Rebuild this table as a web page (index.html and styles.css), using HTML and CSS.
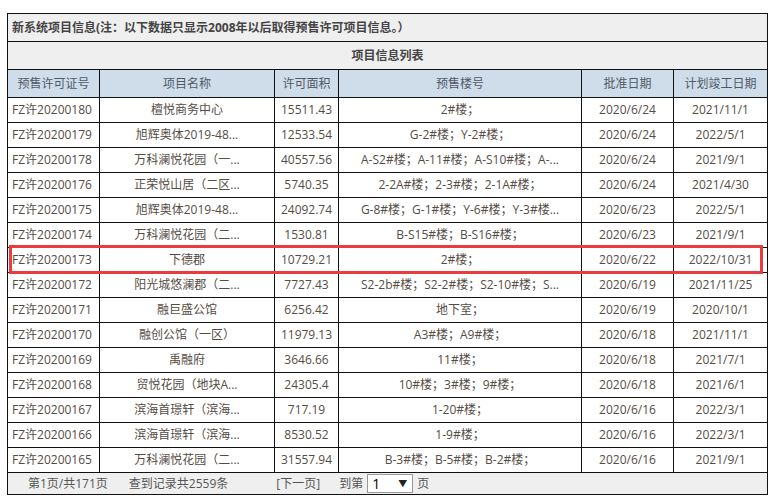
FILE: index.html
```html
<!DOCTYPE html>
<html lang="zh-CN">
<head>
<meta charset="utf-8">
<title>项目信息列表</title>
<link rel="stylesheet" href="styles.css">
</head>
<body>
<div class="wrap">
<table class="grid">
<colgroup>
<col class="c1"><col class="c2"><col class="c3"><col class="c4"><col class="c5"><col class="c6">
</colgroup>
<tr class="title"><td colspan="6">新系统项目信息(注：以下数据只显示2008年以后取得预售许可项目信息。）</td></tr>
<tr class="subtitle"><td colspan="6">项目信息列表</td></tr>
<tr class="head"><td>预售许可证号</td><td>项目名称</td><td>许可面积</td><td>预售楼号</td><td>批准日期</td><td>计划竣工日期</td></tr>
<tr class="row"><td class="l">FZ许20200180</td><td>檀悦商务中心</td><td>15511.43</td><td>2#楼；</td><td>2020/6/24</td><td>2021/11/1</td></tr>
<tr class="row"><td class="l">FZ许20200179</td><td>旭辉奥体2019-48...</td><td>12533.54</td><td>G-2#楼；Y-2#楼；</td><td>2020/6/24</td><td>2022/5/1</td></tr>
<tr class="row"><td class="l">FZ许20200178</td><td>万科澜悦花园（一...</td><td>40557.56</td><td>A-S2#楼；A-11#楼；A-S10#楼；A-...</td><td>2020/6/24</td><td>2021/9/1</td></tr>
<tr class="row"><td class="l">FZ许20200176</td><td>正荣悦山居（二区...</td><td>5740.35</td><td>2-2A#楼；2-3#楼；2-1A#楼；</td><td>2020/6/24</td><td>2021/4/30</td></tr>
<tr class="row"><td class="l">FZ许20200175</td><td>旭辉奥体2019-48...</td><td>24092.74</td><td>G-8#楼；G-1#楼；Y-6#楼；Y-3#楼...</td><td>2020/6/23</td><td>2022/5/1</td></tr>
<tr class="row"><td class="l">FZ许20200174</td><td>万科澜悦花园（二...</td><td>1530.81</td><td>B-S15#楼；B-S16#楼；</td><td>2020/6/23</td><td>2021/9/1</td></tr>
<tr class="row hl"><td class="l">FZ许20200173</td><td>下德郡</td><td>10729.21</td><td>2#楼；</td><td>2020/6/22</td><td>2022/10/31</td></tr>
<tr class="row"><td class="l">FZ许20200172</td><td>阳光城悠澜郡（二...</td><td>7727.43</td><td>S2-2b#楼；S2-2#楼；S2-10#楼；S...</td><td>2020/6/19</td><td>2021/11/25</td></tr>
<tr class="row"><td class="l">FZ许20200171</td><td>融巨盛公馆</td><td>6256.42</td><td>地下室；</td><td>2020/6/19</td><td>2020/10/1</td></tr>
<tr class="row"><td class="l">FZ许20200170</td><td>融创公馆（一区）</td><td>11979.13</td><td>A3#楼；A9#楼；</td><td>2020/6/18</td><td>2021/11/1</td></tr>
<tr class="row"><td class="l">FZ许20200169</td><td>禹融府</td><td>3646.66</td><td>11#楼；</td><td>2020/6/18</td><td>2021/7/1</td></tr>
<tr class="row"><td class="l">FZ许20200168</td><td>贸悦花园（地块A...</td><td>24305.4</td><td>10#楼；3#楼；9#楼；</td><td>2020/6/18</td><td>2021/6/1</td></tr>
<tr class="row"><td class="l">FZ许20200167</td><td>滨海首璟轩（滨海...</td><td>717.19</td><td>1-20#楼；</td><td>2020/6/16</td><td>2022/3/1</td></tr>
<tr class="row"><td class="l">FZ许20200166</td><td>滨海首璟轩（滨海...</td><td>8530.52</td><td>1-9#楼；</td><td>2020/6/16</td><td>2022/3/1</td></tr>
<tr class="row"><td class="l">FZ许20200165</td><td>万科澜悦花园（二...</td><td>31557.94</td><td>B-3#楼；B-5#楼；B-2#楼；</td><td>2020/6/16</td><td>2021/9/1</td></tr>
<tr class="foot"><td colspan="6">
<div class="pager">
<span class="p1">第1页/共171页</span>
<span class="p2">查到记录共2559条</span>
<span class="p3">[下一页]</span>
<span class="p4">到第</span>
<span class="sel"><span class="sv">1</span><span class="arr">▼</span></span>
<span class="p5">页</span>
</div>
</td></tr>
</table>
</div>
</body>
</html>
```

FILE: styles.css
```css
html, body {
  margin: 0;
  padding: 0;
  background: #fff;
}
body {
  font-family: "Open Sans", "Noto Sans CJK SC", sans-serif;
  font-size: 12px;
  color: #555;
}
.wrap {
  padding: 13px 0 0 7px;
}
.grid {
  border-collapse: collapse;
  width: 760px;
  table-layout: fixed;
}
.c1 { width: 92px; }
.c2 { width: 175px; }
.c3 { width: 64px; }
.c4 { width: 243px; }
.c5 { width: 92px; }
.c6 { width: 94px; }
.grid td {
  border: 1px solid #111;
  padding: 0 2px;
  text-align: center;
  white-space: nowrap;
  overflow: hidden;
  line-height: 16px;
}
.title td {
  height: 27px;
  background: #efefef;
  text-align: left;
  padding-left: 4px;
  font-weight: bold;
  color: #444;
}
.subtitle td {
  height: 27px;
  background: #efefef;
  font-weight: bold;
  color: #444;
}
.head td {
  height: 27px;
  background: #cfdcea;
  color: #505a66;
}
.row td {
  height: 24px;
  color: #554c44;
}
.row td.l {
  text-align: left;
  padding-left: 4px;
}
.row.hl td:first-child {
  position: relative;
  overflow: visible;
}
.row.hl td:first-child::after {
  content: "";
  position: absolute;
  left: 1px;
  top: -3px;
  width: 748px;
  height: 23px;
  border: 3px solid #ea3b3f;
  pointer-events: none;
}
.foot td {
  height: 21px;
  background: #efefef;
  text-align: left;
  padding: 0;
}
.pager {
  display: flex;
  align-items: center;
  color: #555;
}
.p1 { margin-left: 20px; }
.p2 { margin-left: 21px; }
.p3 { margin-left: 48px; }
.p4 { margin-left: 19px; }
.sel {
  display: inline-flex;
  align-items: center;
  justify-content: space-between;
  box-sizing: border-box;
  width: 46px;
  height: 19px;
  margin-left: 4px;
  border: 1px solid #999;
  background: #fff;
  padding: 0 5px 0 4px;
  color: #000;
}
.sv { font-size: 14px; }
.arr { font-size: 9px; color: #222; }
.p5 { margin-left: 4px; }
```
